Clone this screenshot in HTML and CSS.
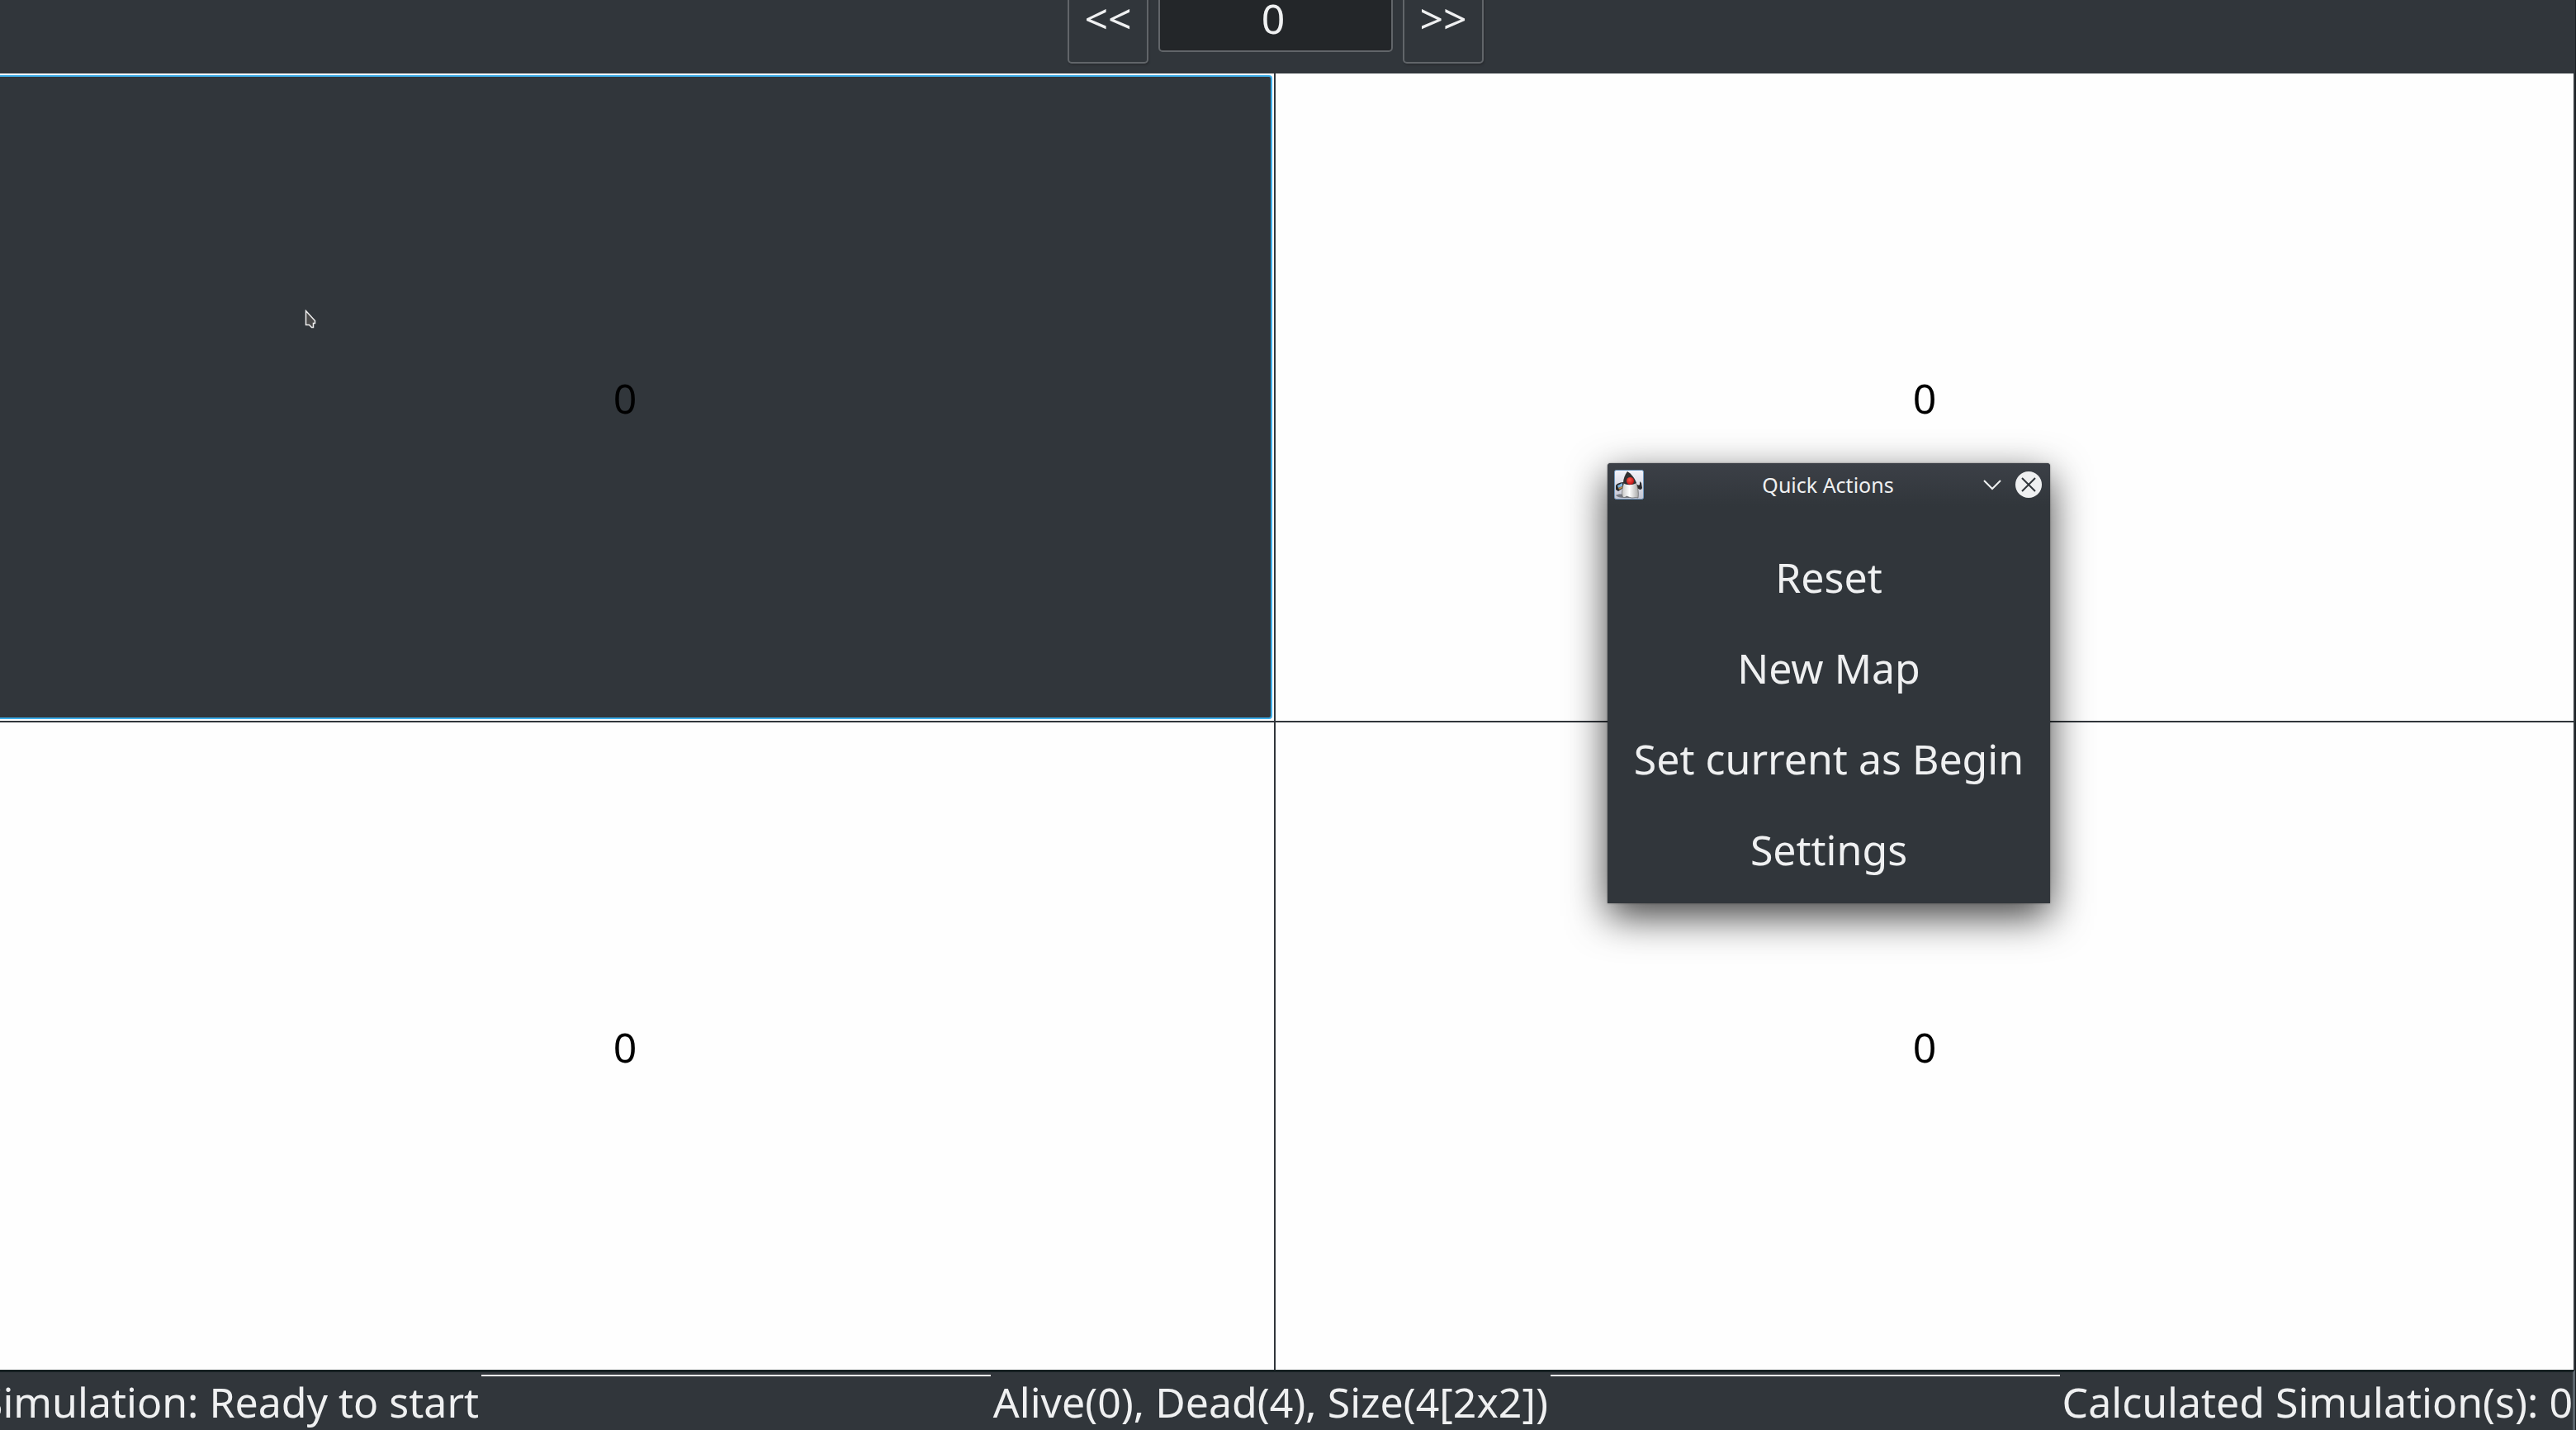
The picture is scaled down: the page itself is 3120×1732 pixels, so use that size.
FILE: index.html
```html
<!DOCTYPE html>
<html lang="en">
<head>
<meta charset="utf-8">
<title>Simulation</title>
<link rel="stylesheet" href="styles.css">
</head>
<body>
<div class="app">
  <header class="toolbar">
    <button class="step" type="button">&lt;&lt;</button>
    <input class="counter" type="text" value="0" aria-label="Generation">
    <button class="step" type="button">&gt;&gt;</button>
  </header>
  <main class="board">
    <button class="cell cell-active" type="button"><span class="cell-face">0</span></button>
    <button class="cell" type="button">0</button>
    <button class="cell" type="button">0</button>
    <button class="cell" type="button">0</button>
  </main>
  <footer class="status">
    <span>Simulation: Ready to start</span>
    <span class="rule"></span>
    <span>Alive(0), Dead(4), Size(4[2x2])</span>
    <span class="rule"></span>
    <span>Calculated Simulation(s): 0</span>
  </footer>
</div>

<section class="dialog" aria-labelledby="dialog-title">
  <div class="titlebar">
    <svg class="app-icon" viewBox="0 0 36 36" aria-hidden="true">
      <defs>
        <linearGradient id="tile" x1="0" y1="0" x2="0" y2="1"><stop offset="0" stop-color="#f4f4fb"/><stop offset="1" stop-color="#c3c5d2"/></linearGradient>
        <linearGradient id="belly" x1="0" y1="0" x2="1" y2="0"><stop offset="0" stop-color="#c9c9c9"/><stop offset=".45" stop-color="#fff"/><stop offset="1" stop-color="#a9a9a9"/></linearGradient>
        <radialGradient id="nose" cx=".4" cy=".35" r=".7"><stop offset="0" stop-color="#ff5a4c"/><stop offset="1" stop-color="#b90d12"/></radialGradient>
      </defs>
      <rect x=".5" y=".5" width="35" height="35" rx="2" fill="url(#tile)" stroke="#6f97bd"/>
      <path d="M2 31c3-2 8-2 10 0l12 3H12c-5 0-8-1-10-3z" fill="#777a82"/>
      <path d="M13 15c-5 0-9 1-11 4v5l3 2 6-4z" fill="#29292b"/>
      <path d="M4 19l6-3v4l-5 2z" fill="#7fb4df"/>
      <path d="M5 22l5-2v2l-4 2z" fill="#b98b4f"/>
      <path d="M28 18c2 1 3 1 3-1v-3l2 2 1 6c-1 3-4 2-6 0z" fill="#2b2b2d"/>
      <path d="M12 15c-2 6-3 12-2 17 1 2 3 2 5 0 3 1 5 2 7 2s4-1 7 0c1-6 0-14-3-19z" fill="url(#belly)" stroke="#555" stroke-width=".6"/>
      <path d="M16 2c-3 4-5 9-5 14 4 3 11 3 16 0-2-6-6-11-11-14z" fill="#303032"/>
      <circle cx="19.500" cy="13.500" r="4.500" fill="url(#nose)"/>
    </svg>
    <h1 class="title" id="dialog-title">Quick Actions</h1>
    <div class="window-buttons">
      <button class="window-button" type="button" aria-label="Shade">
        <svg viewBox="0 0 32 32"><path d="M6 11l10 10 10-10" fill="none" stroke="#eff0f1" stroke-width="2"/></svg>
      </button>
      <button class="window-button" type="button" aria-label="Close">
        <svg viewBox="0 0 32 32"><circle cx="16" cy="16" r="16" fill="#eff0f1"/><path d="M8 8l16 16M24 8L8 24" fill="none" stroke="#31363b" stroke-width="2"/></svg>
      </button>
    </div>
  </div>
  <div class="actions">
    <button class="action" type="button">Reset</button>
    <button class="action" type="button">New Map</button>
    <button class="action" type="button">Set current as Begin</button>
    <button class="action" type="button">Settings</button>
  </div>
</section>

<svg class="pointer" viewBox="0 0 16 24" aria-hidden="true">
  <path d="M1.500 1.500v17h4l3 3h2v-5h2v-3z" fill="#4a4a4a" stroke="#eee" stroke-width="1.500"/>
</svg>
</body>
</html>
```
FILE: styles.css
```css
* {
  box-sizing: border-box;
}

body {
  margin: 0;
  height: 100vh;
  overflow: hidden;
  position: relative;
  background: #1b2023;
  color: #eff0f1;
  font: 50px/68px "Noto Sans", sans-serif;
}

button,
input {
  margin: 0;
  padding: 0;
  border: 0;
  background: none;
  color: inherit;
  font: inherit;
  text-align: center;
}

/* The window is slightly larger than the screen: its top and left run off. */
.app {
  display: flex;
  flex-direction: column;
  height: calc(100vh + 45px);
  margin: -45px 1px 0 -29px;
  background: #31363b;
}

.toolbar {
  display: flex;
  justify-content: center;
  align-items: center;
  gap: 12px;
  padding: 12px 0;
}

.step {
  width: 98px;
  height: 110px;
  border: 2px solid #616569;
  border-radius: 5px;
  box-shadow: 1px 2px 2px #2a2e32;
}

.counter {
  width: 284px;
  height: 82px;
  padding-right: 6px;
  border: 2px solid #616569;
  border-radius: 5px;
  background: #232629;
}

.board {
  flex: 1;
  display: grid;
  grid-template-columns: 1fr 1fr;
  grid-template-rows: 1fr 1fr;
  gap: 2px;
  border-right: 2px solid #31363b;
}

.cell {
  padding-top: 2px;
  background: #fefefe;
  color: #000;
}

.cell-active {
  display: flex;
  padding: 2px;
}

.cell-face {
  flex: 1;
  align-self: stretch;
  display: flex;
  align-items: center;
  justify-content: center;
  padding-top: 2px;
  border: 2px solid #3daee9;
  border-radius: 4px;
  background: #31363b;
}

.status {
  display: flex;
  gap: 3px;
  padding: 2px 0 0 5px;
  border-top: 3px solid #162022;
  border-right: 3px solid #59636b;
  white-space: nowrap;
}

.rule {
  flex: 1;
  height: 2px;
  margin-top: 1px;
  background: #fcfcfc;
}

.dialog {
  position: absolute;
  left: 1947px;
  top: 561px;
  width: 536px;
  border-radius: 4px 4px 0 0;
  background: #31363b;
  box-shadow: 0 0 2px rgba(0, 0, 0, .5), 0 16px 48px rgba(0, 0, 0, .75);
}

.titlebar {
  display: grid;
  grid-template-columns: 1fr auto 1fr;
  align-items: center;
  height: 52px;
  padding: 0 10px 0 8px;
  border-radius: 4px 4px 0 0;
  background: linear-gradient(#3c4047, #31363b);
}

.app-icon {
  width: 36px;
  height: 36px;
}

.title {
  margin: 0;
  font-size: 25px;
  line-height: 36px;
  font-weight: 400;
}

.window-buttons {
  display: flex;
  justify-content: flex-end;
  gap: 12px;
}

.window-button {
  width: 32px;
  height: 32px;
}

.window-button svg {
  display: block;
}

.actions {
  display: flex;
  flex-direction: column;
  padding: 31px 0 10px;
}

.action {
  height: 110px;
}

.pointer {
  position: absolute;
  left: 369px;
  top: 375px;
  width: 16px;
  height: 24px;
}
```
